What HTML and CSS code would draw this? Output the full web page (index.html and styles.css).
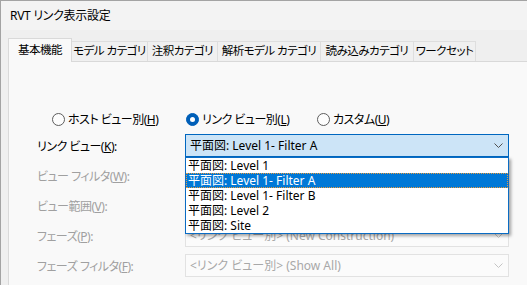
FILE: index.html
```html
<!DOCTYPE html>
<html>
<head>
<meta charset="utf-8">
<title>RVT リンク表示設定</title>
<link rel="stylesheet" href="styles.css">
</head>
<body>
<div class="window">
  <div class="titlebar">RVT リンク表示設定</div>

  <div class="tabs">
    <div class="tab active t1">基本機能</div>
    <div class="tab t2">モデル カテゴリ</div>
    <div class="tab t3">注釈カテゴリ</div>
    <div class="tab t4">解析モデル カテゴリ</div>
    <div class="tab t5">読み込みカテゴリ</div>
    <div class="tab t6">ワークセット</div>
  </div>

  <div class="panel">
    <div class="radios">
      <label class="option"><span class="radio"></span><span>ホスト ビュー別(<u>H</u>)</span></label>
      <label class="option"><span class="radio checked"></span><span>リンク ビュー別(<u>L</u>)</span></label>
      <label class="option"><span class="radio"></span><span>カスタム(<u>U</u>)</span></label>
    </div>

    <div class="form">
      <div class="label">リンク ビュー(<u>K</u>):</div>
      <div class="combo open">
        <span>平面図: Level 1- Filter A</span>
        <svg class="chevron" width="9" height="5" viewBox="0 0 9 5"><polyline points="0.5,0.5 4.5,4.5 8.5,0.5" fill="none" stroke="#505050" stroke-width="1"/></svg>
        <ul class="droplist">
          <li>平面図: Level 1</li>
          <li class="selected">平面図: Level 1- Filter A</li>
          <li>平面図: Level 1- Filter B</li>
          <li>平面図: Level 2</li>
          <li>平面図: Site</li>
        </ul>
      </div>

      <div class="label disabled">ビュー フィルタ(<u>W</u>):</div>
      <div class="combo disabled">
        <span></span>
        <svg class="chevron" width="9" height="5" viewBox="0 0 9 5"><polyline points="0.5,0.5 4.5,4.5 8.5,0.5" fill="none" stroke="#c4c4c4" stroke-width="1"/></svg>
      </div>

      <div class="label disabled">ビュー範囲(<u>V</u>):</div>
      <div class="combo disabled">
        <span></span>
        <svg class="chevron" width="9" height="5" viewBox="0 0 9 5"><polyline points="0.5,0.5 4.5,4.5 8.5,0.5" fill="none" stroke="#c4c4c4" stroke-width="1"/></svg>
      </div>

      <div class="label disabled">フェーズ(<u>P</u>):</div>
      <div class="combo disabled">
        <span>&lt;リンク ビュー別&gt; (New Construction)</span>
        <svg class="chevron" width="9" height="5" viewBox="0 0 9 5"><polyline points="0.5,0.5 4.5,4.5 8.5,0.5" fill="none" stroke="#c4c4c4" stroke-width="1"/></svg>
      </div>

      <div class="label disabled">フェーズ フィルタ(<u>F</u>):</div>
      <div class="combo disabled">
        <span>&lt;リンク ビュー別&gt; (Show All)</span>
        <svg class="chevron" width="9" height="5" viewBox="0 0 9 5"><polyline points="0.5,0.5 4.5,4.5 8.5,0.5" fill="none" stroke="#c4c4c4" stroke-width="1"/></svg>
      </div>
    </div>
  </div>
</div>
</body>
</html>
```

FILE: styles.css
```css
body {
  margin: 0;
  background: #f0f0f0;
  font-family: "Noto Sans", "Noto Sans CJK JP", sans-serif;
  font-size: 12px;
  font-feature-settings: "palt";
  color: #000;
}
.window {
  height: 284px;
  border-top: 1px solid #a3a3a3;
  border-left: 1px solid #a3a3a3;
  background: #efefef;
  overflow: hidden;
}
.titlebar {
  height: 29px;
  line-height: 29px;
  padding-left: 9px;
  background: #f3f3f3;
  letter-spacing: -0.3px;
}

/* tab strip */
.tabs {
  display: flex;
  align-items: flex-end;
  height: 31px;
  margin-left: 7px;
  position: relative;
  z-index: 1;
}
.tab {
  box-sizing: border-box;
  height: 20px;
  line-height: 17px;
  font-size: 11.5px;
  letter-spacing: -0.5px;
  text-align: center;
  white-space: nowrap;
  overflow: hidden;
  background: #f0f0f0;
  border: 1px solid #dedede;
  border-left: none;
  border-bottom: none;
}
.tab.active {
  height: 24px;
  line-height: 21px;
  margin-bottom: -1px;
  background: #f9f9f9;
  border-left: 1px solid #d9d9d9;
  border-color: #d9d9d9;
}
.t1 { width: 64px; }
.t2 { width: 76px; }
.t3 { width: 70px; }
.t4 { width: 103px; }
.t5 { width: 93px; }
.t6 { width: 62px; }

/* page */
.panel {
  width: 560px;
  height: 230px;
  margin-left: 7px;
  background: #f9f9f9;
  border-top: 1px solid #d9d9d9;
  border-left: 1px solid #d9d9d9;
}
.radios {
  display: grid;
  grid-template-columns: 134px 131px auto;
  padding: 48px 0 0 43px;
  height: 14px;
}
.option {
  display: flex;
  align-items: center;
  gap: 3px;
  white-space: nowrap;
  letter-spacing: -0.5px;
}
.radio {
  box-sizing: border-box;
  width: 13px;
  height: 13px;
  border: 1px solid #5d5d5d;
  border-radius: 50%;
  background: #fdfdfd;
  display: flex;
  align-items: center;
  justify-content: center;
}
.radio.checked {
  background: #005fb8;
  border-color: #005fb8;
}
.radio.checked::after {
  content: "";
  width: 5px;
  height: 5px;
  border-radius: 50%;
  background: #fff;
}

.form {
  display: grid;
  grid-template-columns: 148px 324px;
  grid-auto-rows: 30px;
  align-items: center;
  margin-top: 6px;
  padding-left: 28px;
}
.label {
  padding-top: 2px;
  white-space: nowrap;
  letter-spacing: -0.5px;
}
.label.disabled {
  color: #a0a0a0;
}
.combo {
  position: relative;
  box-sizing: border-box;
  height: 23px;
  padding: 0 5px 0 4px;
  display: flex;
  align-items: center;
  justify-content: space-between;
  white-space: nowrap;
  border: 1px solid #e2e2e2;
  background: #fbfbfb;
}
.combo.open {
  border-color: #0067c0;
  background: #cce4f7;
  z-index: 2;
}
.combo.disabled {
  color: #a8a8a8;
}
.droplist {
  position: absolute;
  top: 22px;
  left: -1px;
  width: 324px;
  box-sizing: border-box;
  margin: 0;
  padding: 0;
  list-style: none;
  background: #fff;
  border: 1px solid #0a6cc4;
  box-shadow: 2px 2px 3px rgba(0, 0, 0, 0.35);
}
.droplist li {
  height: 15px;
  line-height: 15px;
  padding-left: 2px;
  color: #000;
}
.droplist li.selected {
  background: #0078d7;
  color: #fff;
  outline: 1px dotted #e89a3c;
  outline-offset: -1px;
}
```
